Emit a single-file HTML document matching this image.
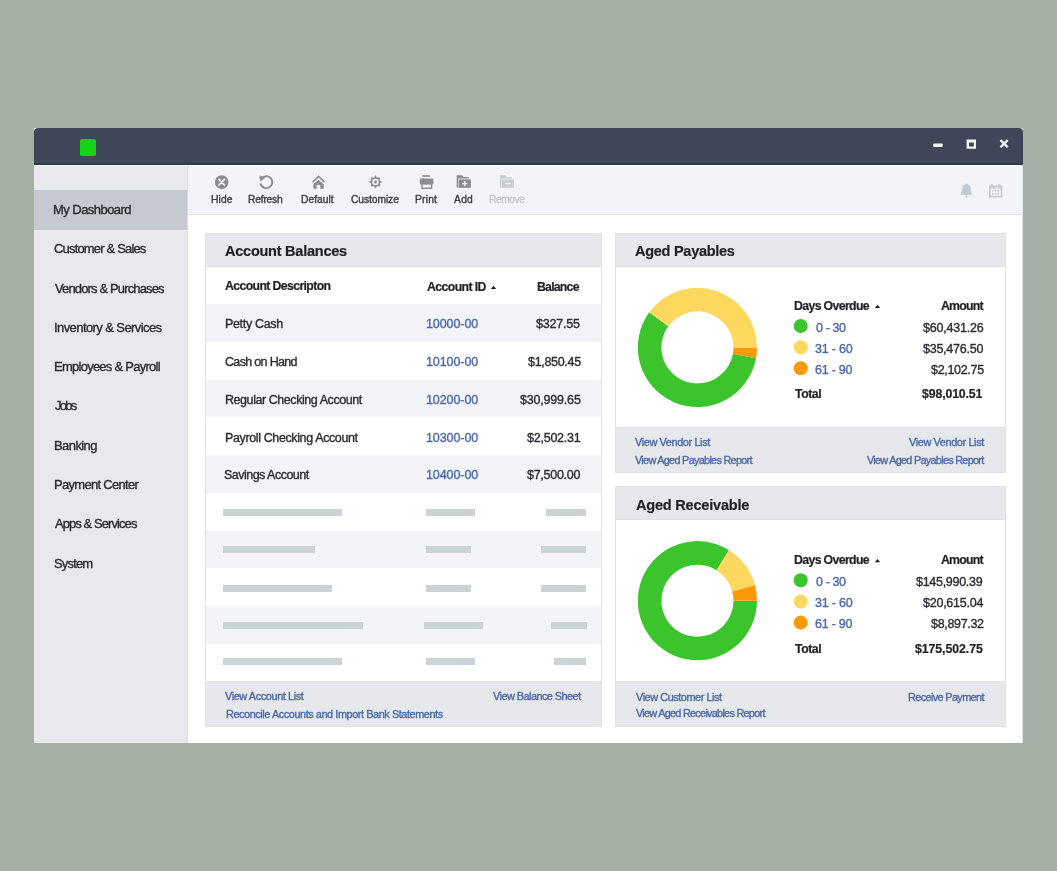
<!DOCTYPE html>
<html><head><meta charset="utf-8">
<style>
html,body{margin:0;padding:0;}
body{width:1057px;height:871px;overflow:hidden;background:#a4b1a4;position:relative;font-family:"Liberation Sans",sans-serif;}
.a{position:absolute;}
.t{position:absolute;white-space:nowrap;font-family:"Liberation Sans",sans-serif;will-change:transform;}
.t.r{-webkit-text-stroke:0.35px currentColor;}
.t.b{-webkit-text-stroke:0.2px currentColor;}
.win{left:34px;top:128px;width:989px;height:615px;background:#fff;}
.title{left:34px;top:128px;width:989px;height:35px;background:#3e4658;border-radius:4px 4px 0 0;border-bottom:2px solid #353a47;}
.side{left:34px;top:165px;width:153px;height:578px;background:#e8e9ec;border-right:1px solid #dcdee2;}
.hl{left:34px;top:190px;width:153px;height:39.5px;background:#c6c9cf;}
.tool{left:188px;top:165px;width:835px;height:49px;background:#f3f4f8;border-bottom:1px solid #e2e4e8;}
.panel{background:#fff;border:1px solid #dfe1e5;box-sizing:border-box;}
.ph{background:#e7e8ec;border-bottom:1px solid #dfe1e5;box-sizing:border-box;}
.stripe{background:#f3f4f8;}
.bar{background:#ccd3d6;height:7px;}
.foot{background:#e7e8ec;border-top:1px solid #dfe1e5;box-sizing:border-box;}
</style></head><body>
<div class="a win"></div>
<div class="a title"></div>
<div class="a" style="left:80px;top:139px;width:16px;height:17px;background:#12d412;border-radius:1.5px;"></div>
<!-- window controls -->
<svg class="a" style="left:0;top:0" width="1057" height="871" viewBox="0 0 1057 871">
  <rect x="933.2" y="143.5" width="9.5" height="3.4" rx="1" fill="#f4f4f4"/>
  <path d="M966.6 139.4 H976 V148.8 H966.6 Z M969.1 142.6 V146.6 H973.8 V142.6 Z" fill="#f4f4f4" fill-rule="evenodd"/>
  <path d="M1001.3 140.9 L1006.9 146.4 M1006.9 140.9 L1001.3 146.4" stroke="#f4f4f4" stroke-width="2.3" stroke-linecap="square"/>
</svg>
<div class="a side"></div>
<div class="a hl"></div>
<div class="a" style="left:34px;top:165px;width:153px;height:2px;background:#edeef1;"></div>
<div class="a tool"></div>
<div class="a" style="left:188px;top:165px;width:835px;height:2px;background:#f7f8fa;"></div>
<div class="a" style="left:1022px;top:165px;width:1px;height:578px;background:#e3e5e9;"></div>

<!-- Account Balances panel -->
<div class="a panel" style="left:205px;top:233px;width:397px;height:494px;"></div>
<div class="a ph" style="left:205px;top:233px;width:397px;height:34px;border-left:1px solid #dfe1e5;border-right:1px solid #dfe1e5;border-top:1px solid #dfe1e5;"></div>
<div class="a stripe" style="left:206px;top:304.00px;width:395px;height:37.75px;"></div>
<div class="a stripe" style="left:206px;top:379.50px;width:395px;height:37.75px;"></div>
<div class="a stripe" style="left:206px;top:455.00px;width:395px;height:37.75px;"></div>
<div class="a stripe" style="left:206px;top:530.50px;width:395px;height:37.75px;"></div>
<div class="a stripe" style="left:206px;top:606.00px;width:395px;height:37.75px;"></div>
<div class="a foot" style="left:205px;top:681px;width:397px;height:46px;border:1px solid #dfe1e5;"></div>
<!-- placeholder bars -->
<div class="a bar" style="left:222.5px;top:509px;width:119px;"></div>
<div class="a bar" style="left:425.8px;top:509px;width:49.6px;"></div>
<div class="a bar" style="left:546px;top:509px;width:40px;"></div>
<div class="a bar" style="left:222.5px;top:546.3px;width:92px;"></div>
<div class="a bar" style="left:425.8px;top:546.3px;width:45px;"></div>
<div class="a bar" style="left:541.3px;top:546.3px;width:44.7px;"></div>
<div class="a bar" style="left:222.5px;top:584.5px;width:109.4px;"></div>
<div class="a bar" style="left:425.8px;top:584.5px;width:45px;"></div>
<div class="a bar" style="left:541.3px;top:584.5px;width:44.7px;"></div>
<div class="a bar" style="left:222.5px;top:622px;width:140.4px;"></div>
<div class="a bar" style="left:424.2px;top:622px;width:59px;"></div>
<div class="a bar" style="left:551px;top:622px;width:36px;"></div>
<div class="a bar" style="left:222.5px;top:658px;width:119px;"></div>
<div class="a bar" style="left:425.8px;top:658px;width:49.6px;"></div>
<div class="a bar" style="left:553.8px;top:658px;width:32.2px;"></div>

<!-- Aged Payables -->
<div class="a panel" style="left:615px;top:233px;width:391px;height:240px;"></div>
<div class="a ph" style="left:615px;top:233px;width:391px;height:34px;border:1px solid #dfe1e5;border-bottom-color:#dfe1e5;"></div>
<div class="a foot" style="left:615px;top:426.5px;width:391px;height:46.5px;border:1px solid #dfe1e5;"></div>
<!-- Aged Receivable -->
<div class="a panel" style="left:615px;top:486.3px;width:391px;height:240.7px;"></div>
<div class="a ph" style="left:615px;top:486.3px;width:391px;height:34px;border:1px solid #dfe1e5;"></div>
<div class="a foot" style="left:615px;top:681.3px;width:391px;height:45.7px;border:1px solid #dfe1e5;"></div>

<svg class="a" style="left:0;top:0" width="1057" height="871" viewBox="0 0 1057 871">
  <!-- ICONS -->
  <g id="donut1"></g>
  <g id="donut2"></g>
</svg>
<svg class="a" style="left:0;top:0" width="1057" height="871" viewBox="0 0 1057 871"><path d="M757.00 347.40 A59.6 59.6 0 0 1 756.00 358.26 L732.80 353.96 A36 36 0 0 0 733.40 347.40 Z" fill="#fa9a08"/><path d="M756.00 358.26 A59.6 59.6 0 1 1 649.18 312.37 L668.28 326.24 A36 36 0 1 0 732.80 353.96 Z" fill="#3cc42d"/><path d="M649.18 312.37 A59.6 59.6 0 0 1 757.00 347.40 L733.40 347.40 A36 36 0 0 0 668.28 326.24 Z" fill="#fcd95e"/><path d="M757.00 600.70 A59.6 59.6 0 1 1 728.98 550.16 L716.48 570.17 A36 36 0 1 0 733.40 600.70 Z" fill="#3cc42d"/><path d="M728.98 550.16 A59.6 59.6 0 0 1 754.97 585.27 L732.17 591.38 A36 36 0 0 0 716.48 570.17 Z" fill="#fcd95e"/><path d="M754.97 585.27 A59.6 59.6 0 0 1 757.00 600.70 L733.40 600.70 A36 36 0 0 0 732.17 591.38 Z" fill="#fa9a08"/><circle cx="800.7" cy="326.00" r="7" fill="#3cc42d"/><circle cx="800.7" cy="347.20" r="7" fill="#fcd95e"/><circle cx="800.7" cy="368.30" r="7" fill="#fa9a08"/><path d="M874.8 308.0 L880.2 308.0 L877.5 304.8 Z" fill="#1f2125"/><circle cx="800.7" cy="580.30" r="7" fill="#3cc42d"/><circle cx="800.7" cy="601.50" r="7" fill="#fcd95e"/><circle cx="800.7" cy="622.60" r="7" fill="#fa9a08"/><path d="M874.8 562.3 L880.2 562.3 L877.5 559.1 Z" fill="#1f2125"/><path d="M490.8 289 L496.2 289 L493.5 285.8 Z" fill="#1f2125"/><g fill="#8b8c8f" stroke="none">
  <circle cx="221.7" cy="182.1" r="6.8"/>
</g>
<path d="M219 179.4 L224.4 184.8 M224.4 179.4 L219 184.8" stroke="#f3f4f8" stroke-width="1.8" stroke-linecap="round"/>
<!-- refresh -->
<path d="M261.6 178.4 A6 6 0 1 1 260.5 183.5" fill="none" stroke="#8b8c8f" stroke-width="1.9"/>
<path d="M259.5 175.5 L265.5 177.8 L260 181.5 Z" fill="#8b8c8f"/>
<!-- house -->
<path d="M312.6 182.2 L318.5 176.4 L324.5 182.2" fill="none" stroke="#8b8c8f" stroke-width="1.6"/>
<path d="M318.5 179.7 L323.7 184.2 V188.8 H320.3 V185 H316.8 V188.8 H313.3 V184.2 Z" fill="#8b8c8f"/>
<!-- gear -->
<g transform="translate(375.5 181.9)">
  <polygon points="0.00,-6.70 1.72,-4.16 4.74,-4.74 4.16,-1.72 6.70,0.00 4.16,1.72 4.74,4.74 1.72,4.16 0.00,6.70 -1.72,4.16 -4.74,4.74 -4.16,1.72 -6.70,0.00 -4.16,-1.72 -4.74,-4.74 -1.72,-4.16" fill="#8b8c8f"/>
  <circle r="3.2" fill="#f3f4f8"/>
  <circle r="1.5" fill="#8b8c8f"/>
</g>
<!-- printer -->
<g fill="#8b8c8f">
  <rect x="422.2" y="175.2" width="7.9" height="1.6"/>
  <rect x="419.9" y="178.4" width="13.5" height="6.2" rx="1"/>
</g>
<rect x="422" y="183.9" width="9.6" height="4.4" fill="#f3f4f8" stroke="#8b8c8f" stroke-width="1.4"/>
<!-- add folder -->
<g fill="#8b8c8f">
  <path d="M456.7 175.2 H462 L463.3 177 H468.8 V178.4 H458.2 V187.8 H456.7 Z"/>
  <path d="M458.8 179.4 H470.8 V187.8 H458.8 Z"/>
</g>
<path d="M464.8 181 V186.2 M462.2 183.6 H467.4" stroke="#f3f4f8" stroke-width="1.4"/>
<!-- remove folder -->
<g fill="#c9ccd1">
  <path d="M500 175.2 H505.3 L506.6 177 H512 V178.4 H501.5 V187.8 H500 Z"/>
  <path d="M502.1 179.4 H513.9 V187.8 H502.1 Z"/>
</g>
<path d="M505.5 183.6 H510.7" stroke="#f3f4f8" stroke-width="1.4"/>
<!-- bell -->
<path d="M966.4 183.6 Q970.4 185.2 970.7 188 V191.6 L972.4 194.8 H960.3 L962.1 191.6 V188 Q962.4 185.2 966.4 183.6 Z" fill="#c5c9d0"/>
<rect x="965.4" y="195.8" width="2.1" height="1.7" rx="0.8" fill="#c5c9d0"/>
<!-- calendar -->
<g fill="#c5c9d0">
  <rect x="989" y="185.5" width="13.3" height="1.8"/>
  <rect x="989" y="185.5" width="1.6" height="11.9"/>
  <rect x="1000.7" y="185.5" width="1.6" height="11.9"/>
  <rect x="989" y="195.8" width="13.3" height="1.6"/>
  <rect x="989" y="187.3" width="13.3" height="1.2"/>
  <rect x="991.2" y="184" width="1.6" height="2.2"/>
  <rect x="998.5" y="184" width="1.6" height="2.2"/>
  <rect x="992" y="190" width="1.6" height="1.5"/><rect x="994.8" y="190" width="1.6" height="1.5"/><rect x="997.6" y="190" width="1.6" height="1.5"/>
  <rect x="992" y="193" width="1.6" height="1.5"/><rect x="994.8" y="193" width="1.6" height="1.5"/><rect x="997.6" y="193" width="1.6" height="1.5"/>
</g>
</svg>
<span class="t r" style="left:53.33px;top:203.20px;font-size:13px;line-height:13px;font-weight:400;color:#2a2c30;letter-spacing:-0.549px">My Dashboard</span>
<span class="t r" style="left:54.01px;top:242.30px;font-size:13px;line-height:13px;font-weight:400;color:#2a2c30;letter-spacing:-0.827px">Customer &amp; Sales</span>
<span class="t r" style="left:55.36px;top:281.70px;font-size:13px;line-height:13px;font-weight:400;color:#2a2c30;letter-spacing:-0.858px">Vendors &amp; Purchases</span>
<span class="t r" style="left:54.45px;top:321.00px;font-size:13px;line-height:13px;font-weight:400;color:#2a2c30;letter-spacing:-0.584px">Inventory &amp; Services</span>
<span class="t r" style="left:54.33px;top:360.40px;font-size:13px;line-height:13px;font-weight:400;color:#2a2c30;letter-spacing:-0.744px">Employees &amp; Payroll</span>
<span class="t r" style="left:55.34px;top:398.70px;font-size:13px;line-height:13px;font-weight:400;color:#2a2c30;letter-spacing:-1.708px">Jobs</span>
<span class="t r" style="left:54.33px;top:438.80px;font-size:13px;line-height:13px;font-weight:400;color:#2a2c30;letter-spacing:-0.584px">Banking</span>
<span class="t r" style="left:54.33px;top:477.50px;font-size:13px;line-height:13px;font-weight:400;color:#2a2c30;letter-spacing:-0.703px">Payment Center</span>
<span class="t r" style="left:54.61px;top:517.10px;font-size:13px;line-height:13px;font-weight:400;color:#2a2c30;letter-spacing:-0.926px">Apps &amp; Services</span>
<span class="t r" style="left:53.92px;top:556.70px;font-size:13px;line-height:13px;font-weight:400;color:#2a2c30;letter-spacing:-0.830px">System</span>
<span class="t r" style="left:211.29px;top:194.78px;font-size:10.3px;line-height:10.3px;font-weight:400;color:#3a3c40;letter-spacing:0.136px">Hide</span>
<span class="t r" style="left:248.49px;top:194.78px;font-size:10.3px;line-height:10.3px;font-weight:400;color:#3a3c40;letter-spacing:-0.215px">Refresh</span>
<span class="t r" style="left:301.49px;top:194.78px;font-size:10.3px;line-height:10.3px;font-weight:400;color:#3a3c40;letter-spacing:0.001px">Default</span>
<span class="t r" style="left:350.68px;top:194.78px;font-size:10.3px;line-height:10.3px;font-weight:400;color:#3a3c40;letter-spacing:-0.095px">Customize</span>
<span class="t r" style="left:415.29px;top:194.78px;font-size:10.3px;line-height:10.3px;font-weight:400;color:#3a3c40;letter-spacing:0.182px">Print</span>
<span class="t r" style="left:454.47px;top:194.78px;font-size:10.3px;line-height:10.3px;font-weight:400;color:#3a3c40;letter-spacing:0.258px">Add</span>
<span class="t r" style="left:488.89px;top:194.78px;font-size:10.3px;line-height:10.3px;font-weight:400;color:#c4c7cc;letter-spacing:-0.495px">Remove</span>
<span class="t b" style="left:225.34px;top:243.63px;font-size:14.5px;line-height:14.5px;font-weight:700;color:#1f2125;letter-spacing:-0.238px">Account Balances</span>
<span class="t b" style="left:634.94px;top:243.63px;font-size:14.5px;line-height:14.5px;font-weight:700;color:#1f2125;letter-spacing:-0.269px">Aged Payables</span>
<span class="t b" style="left:635.94px;top:497.93px;font-size:14.5px;line-height:14.5px;font-weight:700;color:#1f2125;letter-spacing:-0.190px">Aged Receivable</span>
<span class="t b" style="left:225.47px;top:279.99px;font-size:12.3px;line-height:12.3px;font-weight:700;color:#1f2125;letter-spacing:-0.634px">Account Descripton</span>
<span class="t b" style="left:426.67px;top:280.89px;font-size:12.3px;line-height:12.3px;font-weight:700;color:#1f2125;letter-spacing:-0.600px">Account ID</span>
<span class="t b" style="left:537.20px;top:280.89px;font-size:12.3px;line-height:12.3px;font-weight:700;color:#1f2125;letter-spacing:-0.782px">Balance</span>
<span class="t r" style="left:224.82px;top:318.22px;font-size:12.5px;line-height:12.5px;font-weight:400;color:#2a2c30;letter-spacing:-0.337px">Petty Cash</span>
<span class="t r" style="left:425.56px;top:318.22px;font-size:12.5px;line-height:12.5px;font-weight:400;color:#4b69a8;letter-spacing:-0.090px">10000-00</span>
<span class="t r" style="left:536.12px;top:318.22px;font-size:12.5px;line-height:12.5px;font-weight:400;color:#2a2c30;letter-spacing:-0.198px">$327.55</span>
<span class="t r" style="left:225.06px;top:356.22px;font-size:12.5px;line-height:12.5px;font-weight:400;color:#2a2c30;letter-spacing:-0.672px">Cash on Hand</span>
<span class="t r" style="left:425.56px;top:356.22px;font-size:12.5px;line-height:12.5px;font-weight:400;color:#4b69a8;letter-spacing:-0.090px">10100-00</span>
<span class="t r" style="left:527.72px;top:356.22px;font-size:12.5px;line-height:12.5px;font-weight:400;color:#2a2c30;letter-spacing:-0.316px">$1,850.45</span>
<span class="t r" style="left:224.82px;top:393.72px;font-size:12.5px;line-height:12.5px;font-weight:400;color:#2a2c30;letter-spacing:-0.439px">Regular Checking Account</span>
<span class="t r" style="left:425.56px;top:393.72px;font-size:12.5px;line-height:12.5px;font-weight:400;color:#4b69a8;letter-spacing:-0.090px">10200-00</span>
<span class="t r" style="left:519.92px;top:393.72px;font-size:12.5px;line-height:12.5px;font-weight:400;color:#2a2c30;letter-spacing:-0.192px">$30,999.65</span>
<span class="t r" style="left:224.82px;top:431.82px;font-size:12.5px;line-height:12.5px;font-weight:400;color:#2a2c30;letter-spacing:-0.377px">Payroll Checking Account</span>
<span class="t r" style="left:425.56px;top:431.82px;font-size:12.5px;line-height:12.5px;font-weight:400;color:#4b69a8;letter-spacing:-0.090px">10300-00</span>
<span class="t r" style="left:526.92px;top:431.82px;font-size:12.5px;line-height:12.5px;font-weight:400;color:#2a2c30;letter-spacing:-0.232px">$2,502.31</span>
<span class="t r" style="left:224.47px;top:469.12px;font-size:12.5px;line-height:12.5px;font-weight:400;color:#2a2c30;letter-spacing:-0.519px">Savings Account</span>
<span class="t r" style="left:425.56px;top:469.12px;font-size:12.5px;line-height:12.5px;font-weight:400;color:#4b69a8;letter-spacing:-0.090px">10400-00</span>
<span class="t r" style="left:526.92px;top:469.12px;font-size:12.5px;line-height:12.5px;font-weight:400;color:#2a2c30;letter-spacing:-0.268px">$7,500.00</span>
<span class="t r" style="left:225.40px;top:691.27px;font-size:10.9px;line-height:10.9px;font-weight:400;color:#4b69a8;letter-spacing:-0.395px">View Account List</span>
<span class="t r" style="left:493.20px;top:691.27px;font-size:10.9px;line-height:10.9px;font-weight:400;color:#4b69a8;letter-spacing:-0.536px">View Balance Sheet</span>
<span class="t r" style="left:225.67px;top:708.77px;font-size:10.9px;line-height:10.9px;font-weight:400;color:#4b69a8;letter-spacing:-0.432px">Reconcile Accounts and Import Bank Statements</span>
<span class="t b" style="left:794.20px;top:299.79px;font-size:12.3px;line-height:12.3px;font-weight:700;color:#1f2125;letter-spacing:-0.640px">Days Overdue</span>
<span class="t b" style="left:940.67px;top:299.79px;font-size:12.3px;line-height:12.3px;font-weight:700;color:#1f2125;letter-spacing:-0.782px">Amount</span>
<span class="t r" style="left:815.56px;top:321.62px;font-size:12.5px;line-height:12.5px;font-weight:400;color:#4b69a8;letter-spacing:-0.392px">0 - 30</span>
<span class="t r" style="left:922.52px;top:321.62px;font-size:12.5px;line-height:12.5px;font-weight:400;color:#2a2c30;letter-spacing:-0.198px">$60,431.26</span>
<span class="t r" style="left:815.09px;top:342.62px;font-size:12.5px;line-height:12.5px;font-weight:400;color:#4b69a8;letter-spacing:-0.191px">31 - 60</span>
<span class="t r" style="left:922.52px;top:342.62px;font-size:12.5px;line-height:12.5px;font-weight:400;color:#2a2c30;letter-spacing:-0.246px">$35,476.50</span>
<span class="t r" style="left:815.25px;top:363.72px;font-size:12.5px;line-height:12.5px;font-weight:400;color:#4b69a8;letter-spacing:-0.241px">61 - 90</span>
<span class="t r" style="left:930.52px;top:363.72px;font-size:12.5px;line-height:12.5px;font-weight:400;color:#2a2c30;letter-spacing:-0.316px">$2,102.75</span>
<span class="t b" style="left:794.81px;top:388.29px;font-size:12.3px;line-height:12.3px;font-weight:700;color:#1f2125;letter-spacing:-0.471px">Total</span>
<span class="t b" style="left:922.42px;top:388.29px;font-size:12.3px;line-height:12.3px;font-weight:700;color:#1f2125;letter-spacing:-0.125px">$98,010.51</span>
<span class="t b" style="left:794.20px;top:554.09px;font-size:12.3px;line-height:12.3px;font-weight:700;color:#1f2125;letter-spacing:-0.640px">Days Overdue</span>
<span class="t b" style="left:940.67px;top:554.09px;font-size:12.3px;line-height:12.3px;font-weight:700;color:#1f2125;letter-spacing:-0.782px">Amount</span>
<span class="t r" style="left:815.56px;top:575.92px;font-size:12.5px;line-height:12.5px;font-weight:400;color:#4b69a8;letter-spacing:-0.392px">0 - 30</span>
<span class="t r" style="left:916.12px;top:575.92px;font-size:12.5px;line-height:12.5px;font-weight:400;color:#2a2c30;letter-spacing:-0.284px">$145,990.39</span>
<span class="t r" style="left:815.09px;top:596.92px;font-size:12.5px;line-height:12.5px;font-weight:400;color:#4b69a8;letter-spacing:-0.191px">31 - 60</span>
<span class="t r" style="left:922.52px;top:596.92px;font-size:12.5px;line-height:12.5px;font-weight:400;color:#2a2c30;letter-spacing:-0.242px">$20,615.04</span>
<span class="t r" style="left:815.25px;top:618.02px;font-size:12.5px;line-height:12.5px;font-weight:400;color:#4b69a8;letter-spacing:-0.241px">61 - 90</span>
<span class="t r" style="left:930.52px;top:618.02px;font-size:12.5px;line-height:12.5px;font-weight:400;color:#2a2c30;letter-spacing:-0.321px">$8,897.32</span>
<span class="t b" style="left:794.81px;top:642.59px;font-size:12.3px;line-height:12.3px;font-weight:700;color:#1f2125;letter-spacing:-0.471px">Total</span>
<span class="t b" style="left:915.22px;top:642.59px;font-size:12.3px;line-height:12.3px;font-weight:700;color:#1f2125;letter-spacing:-0.060px">$175,502.75</span>
<span class="t r" style="left:635.20px;top:437.27px;font-size:10.9px;line-height:10.9px;font-weight:400;color:#4b69a8;letter-spacing:-0.378px">View Vendor List</span>
<span class="t r" style="left:635.20px;top:455.27px;font-size:10.9px;line-height:10.9px;font-weight:400;color:#4b69a8;letter-spacing:-0.719px">View Aged Payables Report</span>
<span class="t r" style="left:909.20px;top:437.27px;font-size:10.9px;line-height:10.9px;font-weight:400;color:#4b69a8;letter-spacing:-0.378px">View Vendor List</span>
<span class="t r" style="left:867.20px;top:455.27px;font-size:10.9px;line-height:10.9px;font-weight:400;color:#4b69a8;letter-spacing:-0.732px">View Aged Payables Report</span>
<span class="t r" style="left:635.80px;top:691.57px;font-size:10.9px;line-height:10.9px;font-weight:400;color:#4b69a8;letter-spacing:-0.440px">View Customer List</span>
<span class="t r" style="left:635.80px;top:708.07px;font-size:10.9px;line-height:10.9px;font-weight:400;color:#4b69a8;letter-spacing:-0.738px">View Aged Receivables Report</span>
<span class="t r" style="left:907.87px;top:691.57px;font-size:10.9px;line-height:10.9px;font-weight:400;color:#4b69a8;letter-spacing:-0.635px">Receive Payment</span>
</body></html>
